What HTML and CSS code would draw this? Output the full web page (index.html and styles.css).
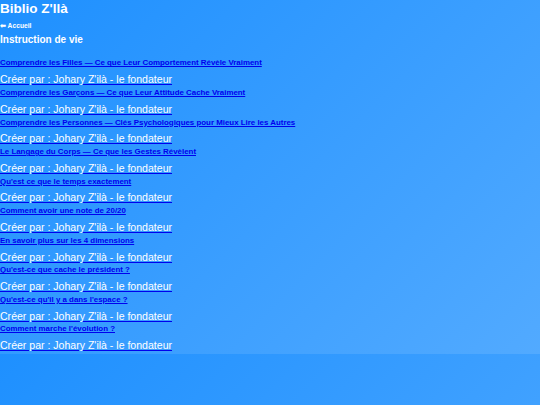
FILE: index.html
```html
<!DOCTYPE html>
<html lang="fr">
<head>
<meta charset="utf-8">
<title>Biblio Z'llà</title>
<link rel="stylesheet" href="styles.css">
</head>
<body>
<header class="site-header">
  <h1 class="site-title">Biblio Z'llà</h1>
  <a class="back-link" href="#">⬅ Accueil</a>
</header>
<h2 class="section-title">Instruction de vie</h2>
<div class="book-list">
  <div class="book">
    <a class="book-title" href="#">Comprendre les Filles — Ce que Leur Comportement Révèle Vraiment</a>
    <a class="book-author" href="#"><span>Créer par : Johary Z'ilà - le fondateur</span></a>
  </div>
  <div class="book">
    <a class="book-title" href="#">Comprendre les Garçons — Ce que Leur Attitude Cache Vraiment</a>
    <a class="book-author" href="#"><span>Créer par : Johary Z'ilà - le fondateur</span></a>
  </div>
  <div class="book">
    <a class="book-title" href="#">Comprendre les Personnes — Clés Psychologiques pour Mieux Lire les Autres</a>
    <a class="book-author" href="#"><span>Créer par : Johary Z'ilà - le fondateur</span></a>
  </div>
  <div class="book">
    <a class="book-title" href="#">Le Langage du Corps — Ce que les Gestes Révèlent</a>
    <a class="book-author" href="#"><span>Créer par : Johary Z'ilà - le fondateur</span></a>
  </div>
  <div class="book">
    <a class="book-title" href="#">Qu'est ce que le temps exactement</a>
    <a class="book-author" href="#"><span>Créer par : Johary Z'ilà - le fondateur</span></a>
  </div>
  <div class="book">
    <a class="book-title" href="#">Comment avoir une note de 20/20</a>
    <a class="book-author" href="#"><span>Créer par : Johary Z'ilà - le fondateur</span></a>
  </div>
  <div class="book">
    <a class="book-title" href="#">En savoir plus sur les 4 dimensions</a>
    <a class="book-author" href="#"><span>Créer par : Johary Z'ilà - le fondateur</span></a>
  </div>
  <div class="book">
    <a class="book-title" href="#">Qu'est-ce que cache le président ?</a>
    <a class="book-author" href="#"><span>Créer par : Johary Z'ilà - le fondateur</span></a>
  </div>
  <div class="book">
    <a class="book-title" href="#">Qu'est-ce qu'il y a dans l'espace ?</a>
    <a class="book-author" href="#"><span>Créer par : Johary Z'ilà - le fondateur</span></a>
  </div>
  <div class="book">
    <a class="book-title" href="#">Comment marche l'évolution ?</a>
    <a class="book-author" href="#"><span>Créer par : Johary Z'ilà - le fondateur</span></a>
  </div>
</div>
</body>
</html>
```
FILE: styles.css
```css
body {
  margin: 0;
  font-family: "Liberation Sans", Arial, sans-serif;
  background: linear-gradient(135deg, #1e90ff, #52aaff);
  color: #ffffff;
}

.site-header {
  display: flex;
  flex-direction: column;
  align-items: flex-start;
}

.site-title {
  margin: 0;
  font-size: 13.5px;
  line-height: 18px;
  font-weight: bold;
}

.back-link {
  margin-top: 4px;
  font-size: 6.7px;
  line-height: 8px;
  font-weight: bold;
  color: #ffffff;
  text-decoration: none;
}

.section-title {
  margin: 4.2px 0 0;
  font-size: 10px;
  line-height: 12px;
  font-weight: bold;
}

.book-list {
  padding-top: 12.3px;
}

.book {
  display: flex;
  flex-direction: column;
  align-items: flex-start;
  padding-bottom: 1.75px;
}

.book-title {
  font-size: 7.9px;
  line-height: 10px;
  font-weight: bold;
  color: #0000ee;
}

.book-author {
  margin-top: 3.8px;
  font-size: 10.55px;
  line-height: 14px;
  color: #0000ee;
}

.book-author span {
  color: #ffffff;
}
```
